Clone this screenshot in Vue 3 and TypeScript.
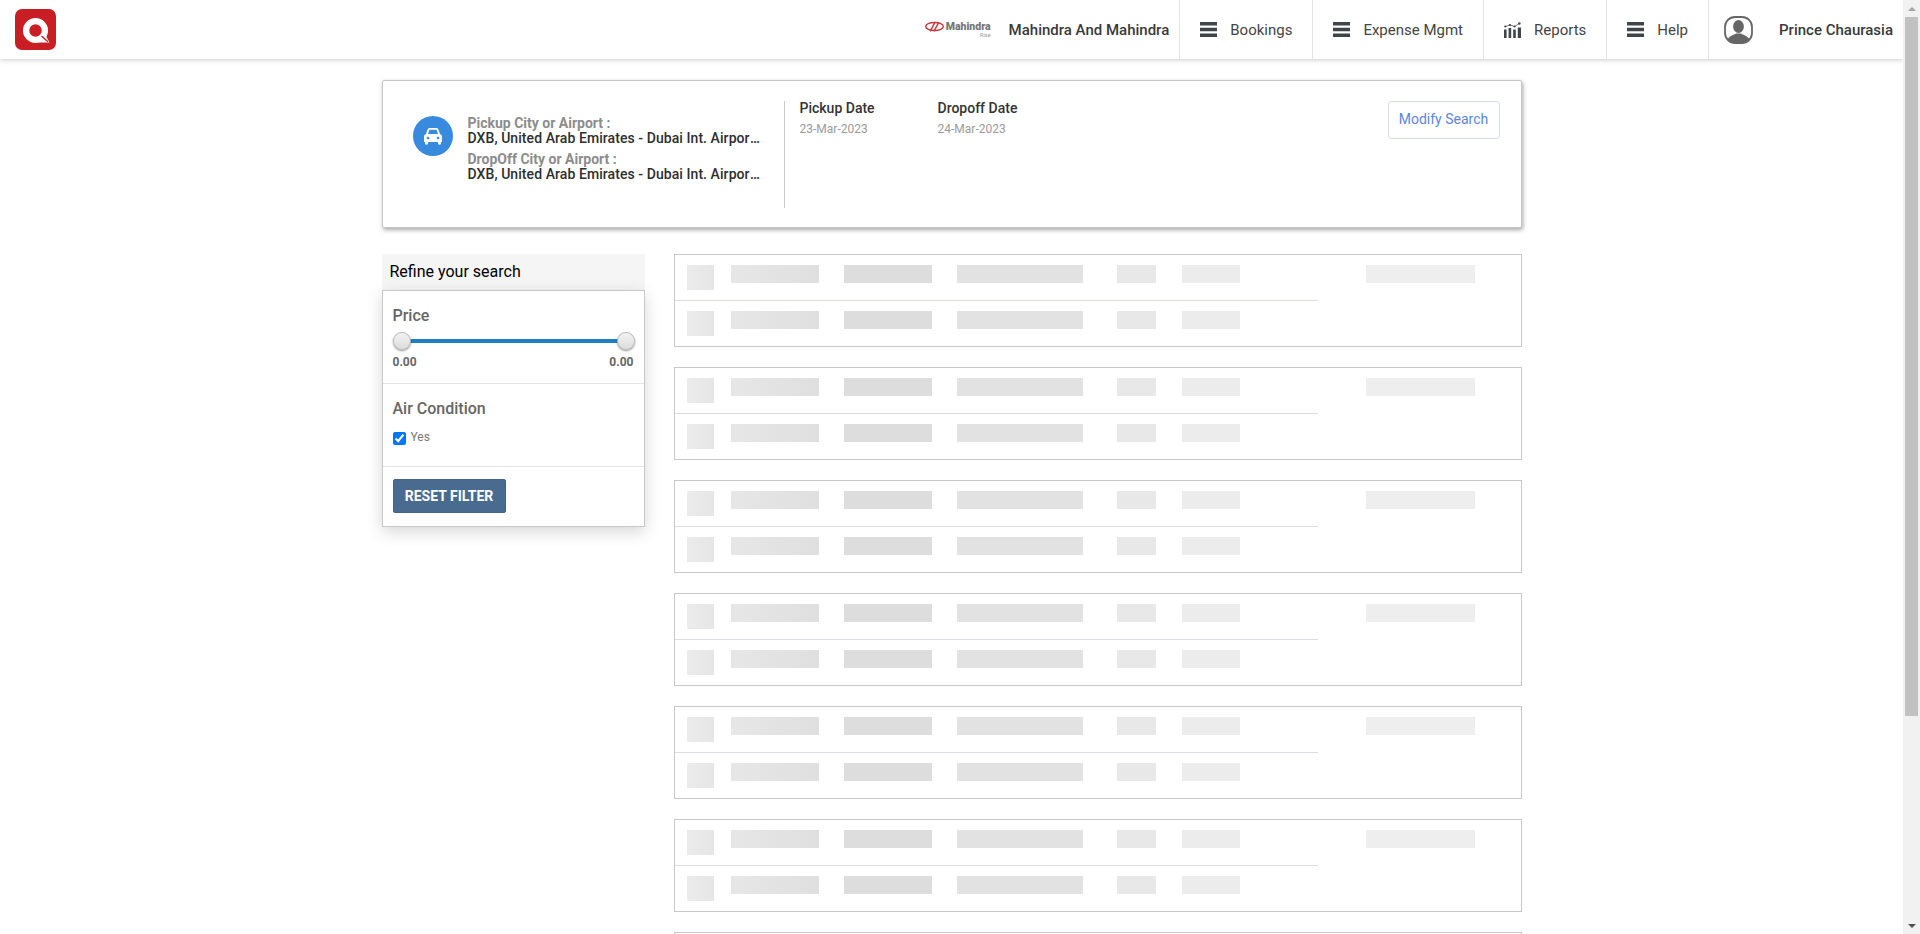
<template>
  <div class="shell">
    <div class="viewport">
      <header class="topbar">
        <a class="brand" aria-label="Home">
          <svg viewBox="0 0 41 41" width="41" height="41">
            <rect width="41" height="41" rx="7" fill="#c81e24" />
            <circle cx="20.500" cy="21.500" r="9.400" fill="none" stroke="#fff" stroke-width="6.300" />
            <path d="M23 30 L30 25 L34.500 33.500 L24 33.500 Z" fill="#fff" />
            <path d="M26.500 27 L33 32.800" stroke="#c81e24" stroke-width="1.300" />
          </svg>
        </a>
        <nav class="nav">
          <div class="org">
            <div class="org-logo">
              <div class="org-mark">
                <svg viewBox="0 0 18 10" width="21" height="11">
                  <ellipse cx="9" cy="5" rx="8" ry="3.600" fill="none" stroke="#c8383a" stroke-width="1.300" />
                  <path d="M5 9.500 L9.500 1 M8.500 9.500 L13 1" stroke="#c8383a" stroke-width="1.300" />
                </svg>
                <span class="org-word">Mahindra</span>
              </div>
              <span class="org-rise">Rise</span>
            </div>
            <span class="org-name">Mahindra And Mahindra</span>
          </div>
          <a v-for="item in navItems" :key="item.label" class="nav-item">
            <svg v-if="item.icon === 'bars'" class="nav-icon" viewBox="0 0 17 15" width="17" height="15">
              <path d="M0 0h17v3.600H0zM0 5.700h17v3.600H0zM0 11.400h17V15H0z" fill="#3f4548" />
            </svg>
            <svg v-else class="nav-icon" viewBox="0 0 17 16" width="17" height="16">
              <path d="M0 7.500h2.600V16H0zM4.600 6h2.600v10H4.600zM9.200 7.500h2.600V16H9.200zM13.800 5.500H17V16h-3.200z" fill="#3f4548" />
              <circle cx="1.300" cy="4.500" r="1.100" fill="#3f4548" />
              <circle cx="5.900" cy="3" r="1.100" fill="#3f4548" />
              <circle cx="10.500" cy="4.500" r="1.100" fill="#3f4548" />
              <circle cx="15.400" cy="1.500" r="1.200" fill="#3f4548" />
              <path d="M1.300 4.500 L5.900 3 L10.500 4.500 L15.400 1.500" fill="none" stroke="#3f4548" stroke-width="0.700" />
            </svg>
            <span>{{ item.label }}</span>
          </a>
          <div class="user">
            <svg viewBox="0 0 29 28" width="29" height="28">
              <defs>
                <clipPath id="avatar-clip"><rect x="1" y="1" width="27" height="26" rx="10" /></clipPath>
              </defs>
              <g clip-path="url(#avatar-clip)">
                <ellipse cx="14.500" cy="10.500" rx="5.400" ry="6.400" fill="#666" />
                <path d="M2 28 C3 20 9 19.500 12 17.500 L17 17.500 C20 19.500 26 20 27 28 Z" fill="#666" />
              </g>
              <rect x="1" y="1" width="27" height="26" rx="10" fill="none" stroke="#666" stroke-width="1.800" />
            </svg>
            <span class="user-name">Prince Chaurasia</span>
          </div>
        </nav>
      </header>

      <main class="page">
        <section class="summary">
          <div class="route">
            <span class="car-badge">
              <svg viewBox="0 0 20 17" width="20" height="17">
                <path
                  d="M4.600 1.600C4.900.7 5.600 0 6.600 0h6.800c1 0 1.700.7 2 1.600L17 6c1.200.4 2 1.300 2 2.600V14h-1v1.600c0 .7-.5 1.200-1.200 1.200h-.6c-.7 0-1.200-.5-1.200-1.200V14H5v1.600c0 .7-.5 1.200-1.200 1.200h-.6c-.7 0-1.200-.5-1.200-1.200V14H1V8.600C1 7.300 1.800 6.400 3 6zM5 6h10l-1.200-3.800c-.1-.3-.3-.5-.6-.5H6.800c-.3 0-.5.2-.6.5z"
                  fill="#fff"
                  fill-rule="evenodd"
                />
                <circle cx="5" cy="10" r="1.300" fill="#388ade" />
                <circle cx="15" cy="10" r="1.300" fill="#388ade" />
              </svg>
            </span>
            <div class="route-text">
              <div class="route-label">Pickup City or Airport :</div>
              <div class="route-value">DXB, United Arab Emirates - Dubai Int. Airport (DXB)</div>
              <div class="route-label second">DropOff City or Airport :</div>
              <div class="route-value">DXB, United Arab Emirates - Dubai Int. Airport (DXB)</div>
            </div>
          </div>
          <div class="dates">
            <div class="date-col">
              <div class="date-title">Pickup Date</div>
              <div class="date-value">23-Mar-2023</div>
            </div>
            <div class="date-col">
              <div class="date-title">Dropoff Date</div>
              <div class="date-value">24-Mar-2023</div>
            </div>
          </div>
          <button type="button" class="modify">Modify Search</button>
        </section>

        <div class="content">
          <aside class="sidebar">
            <h2 class="refine">Refine your search</h2>
            <div class="filters">
              <div class="filter filter-price">
                <h3 class="filter-title">Price</h3>
                <div class="slider">
                  <span class="slider-track"></span>
                  <span class="handle"></span>
                  <span class="handle"></span>
                </div>
                <div class="slider-values">
                  <span>0.00</span>
                  <span>0.00</span>
                </div>
              </div>
              <div class="filter filter-air">
                <h3 class="filter-title">Air Condition</h3>
                <label class="check">
                  <input v-model="airCondition" type="checkbox" />
                  <span>Yes</span>
                </label>
              </div>
              <div class="filter filter-reset">
                <button type="button" class="reset">RESET FILTER</button>
              </div>
            </div>
          </aside>

          <div class="results">
            <div v-for="n in placeholderCount" :key="n" class="result">
              <div class="result-main">
                <div v-for="row in 2" :key="row" class="result-row">
                  <span class="sk sk-thumb"></span>
                  <span class="sk sk-a"></span>
                  <span class="sk sk-b"></span>
                  <span class="sk sk-c"></span>
                  <span class="sk sk-d"></span>
                  <span class="sk sk-e"></span>
                </div>
              </div>
              <span class="sk sk-price"></span>
            </div>
          </div>
        </div>
      </main>
    </div>
    <div class="scrollbar" aria-hidden="true">
      <span class="scroll-arrow up"></span>
      <span class="scroll-thumb"></span>
      <span class="scroll-rest"></span>
      <span class="scroll-arrow down"></span>
    </div>
  </div>
</template>

<script setup lang="ts">
import { ref } from 'vue';

const navItems = [
  { label: 'Bookings', icon: 'bars' },
  { label: 'Expense Mgmt', icon: 'bars' },
  { label: 'Reports', icon: 'chart' },
  { label: 'Help', icon: 'bars' },
];
const placeholderCount = 8;
const airCondition = ref(true);
</script>

<style scoped>
.shell {
  display: flex;
  height: 100vh;
  overflow: hidden;
  background: #fff;
}
.viewport {
  flex: 1;
  min-width: 0;
  overflow: hidden;
}
.scrollbar {
  display: flex;
  flex-direction: column;
  flex: none;
  width: 17px;
  background: #f1f1f1;
}
.scroll-arrow {
  display: flex;
  align-items: center;
  justify-content: center;
  flex: none;
  height: 17px;
}
.scroll-arrow::before {
  content: '';
  border-left: 4px solid transparent;
  border-right: 4px solid transparent;
}
.scroll-arrow.up::before {
  border-bottom: 4px solid #a3a3a3;
}
.scroll-arrow.down::before {
  border-top: 4px solid #505050;
}
.scroll-thumb {
  flex: none;
  height: 699px;
  margin: 0 2px;
  background: #c1c1c1;
}
.scroll-rest {
  flex: 1;
}

.topbar {
  display: flex;
  align-items: center;
  height: 59px;
  background: #fff;
  box-shadow: 0 1px 5px rgba(0, 0, 0, 0.2);
  font-family: Roboto, sans-serif;
  position: relative;
}
.brand {
  display: flex;
  margin-left: 15px;
}
.nav {
  display: flex;
  align-items: stretch;
  height: 100%;
  margin-left: auto;
  font-size: 15px;
  color: #444;
}
.org {
  display: flex;
  align-items: center;
  padding-right: 10px;
}
.org-logo {
  display: flex;
  flex-direction: column;
  align-items: flex-end;
  width: 67px;
  margin-right: 18px;
  margin-top: 1px;
}
.org-mark {
  display: flex;
  align-items: center;
  gap: 1px;
}
.org-word {
  font-size: 10.500px;
  font-weight: 900;
  line-height: 10px;
  color: #777;
}
.org-rise {
  font-size: 5.500px;
  line-height: 7px;
  color: #999;
}
.org-name,
.user-name {
  font-weight: 500;
  color: #3a3a3a;
}
.nav-item {
  display: flex;
  align-items: center;
  padding: 0 20px;
  border-left: 1px solid #e4e4e4;
}
.nav-icon {
  margin-right: 13px;
}
.user {
  display: flex;
  align-items: center;
  padding: 0 10px 0 15px;
  border-left: 1px solid #e4e4e4;
}
.user svg {
  margin-right: 26px;
}

.page {
  width: 1140px;
  margin: 21px auto 0;
  padding-bottom: 64px;
  font-family: Roboto, sans-serif;
}
.summary {
  display: flex;
  align-items: flex-start;
  height: 148px;
  box-sizing: border-box;
  padding: 20px 21px 19px 30px;
  border: 1px solid #c6c6c6;
  border-radius: 2px;
  box-shadow: 1px 2px 4px rgba(0, 0, 0, 0.35);
  background: #fff;
}
.route {
  display: flex;
  gap: 15px;
  width: 372px;
  height: 107px;
  box-sizing: border-box;
  padding-top: 15px;
  border-right: 1px solid #ccc;
}
.car-badge {
  display: flex;
  align-items: center;
  justify-content: center;
  flex: none;
  width: 40px;
  height: 40px;
  border-radius: 50%;
  background: #388ade;
}
.route-text {
  width: 294px;
  font-size: 14px;
  font-weight: 500;
  line-height: 15px;
}
.route-label {
  color: #8c8c8c;
  font-weight: 700;
}
.route-label.second {
  margin-top: 6px;
}
.route-value {
  color: #2e2e2e;
  letter-spacing: 0.07px;
  white-space: nowrap;
  overflow: hidden;
  text-overflow: ellipsis;
}
.dates {
  display: flex;
  padding-left: 15px;
}
.date-col {
  width: 138px;
}
.date-title {
  font-size: 14px;
  font-weight: 500;
  line-height: 15px;
  color: #333;
}
.date-value {
  margin-top: 6px;
  font-size: 12px;
  line-height: 15px;
  color: #9a9a9a;
}
.modify {
  width: 112px;
  height: 38px;
  margin-left: auto;
  padding: 0 0 2px;
  border: 1px solid #d6dcea;
  border-radius: 3px;
  background: #fff;
  color: #5c86dc;
  font-family: Roboto, sans-serif;
  font-size: 14px;
}

.content {
  display: flex;
  align-items: flex-start;
  gap: 29px;
  margin-top: 26px;
}
.sidebar {
  flex: none;
  width: 263px;
}
.refine {
  margin: 0;
  height: 36px;
  padding-left: 8px;
  background: #f5f5f5;
  color: #000;
  font-size: 16px;
  font-weight: 400;
  line-height: 35px;
}
.filters {
  border: 1px solid #c8c8c8;
  background: #fff;
  box-shadow: 0 5px 15px rgba(0, 0, 0, 0.16);
}
.filter {
  padding: 0 10px;
}
.filter + .filter {
  border-top: 1px solid #e4e4e4;
}
.filter-title {
  margin: 0;
  font-size: 16px;
  font-weight: 500;
  line-height: 18px;
  color: #666;
}
.filter-price {
  height: 92px;
  padding-top: 16px;
  box-sizing: border-box;
}
.slider {
  display: flex;
  justify-content: space-between;
  position: relative;
  margin-top: 8px;
  height: 18px;
  width: 242px;
}
.slider-track {
  position: absolute;
  left: 9px;
  right: 9px;
  top: 6px;
  height: 4px;
  background: #1f7fc4;
}
.handle {
  position: relative;
  box-sizing: border-box;
  width: 18px;
  height: 18px;
  margin-top: -1px;
  border-radius: 50%;
  border: 1px solid #bbb;
  background: linear-gradient(to bottom, #f3f3f3, #dcdcdc);
  box-shadow: 0 1px 2px rgba(0, 0, 0, 0.45);
}
.slider-values {
  display: flex;
  justify-content: space-between;
  width: 241px;
  margin-top: 4px;
  font-size: 12px;
  font-weight: 700;
  line-height: 15px;
  color: #666;
}
.filter-air {
  height: 83px;
  padding-top: 16px;
  box-sizing: border-box;
}
.check {
  display: flex;
  align-items: flex-start;
  margin-top: 12px;
  font-size: 12px;
  line-height: 14px;
  color: #777;
}
.check input {
  width: 13px;
  height: 13px;
  margin: 2px 5px 0 0;
}
.filter-reset {
  height: 60px;
  padding-top: 12px;
  box-sizing: border-box;
}
.reset {
  width: 113px;
  height: 34px;
  padding: 0;
  border: 1px solid #466586;
  border-radius: 2px;
  background: #4a6b90;
  color: #fff;
  font-family: Roboto, sans-serif;
  font-size: 14px;
  font-weight: 700;
}

.results {
  display: flex;
  flex-direction: column;
  gap: 20px;
  flex: none;
  width: 848px;
}
.result {
  display: flex;
  align-items: flex-start;
  border: 1px solid #c8c8c8;
}
.result-main {
  flex: none;
  width: 643px;
}
.result-row {
  display: flex;
  align-items: flex-start;
  height: 45px;
  box-sizing: border-box;
  padding: 10px 0 0 12px;
}
.result-row + .result-row {
  height: 46px;
  padding-top: 10px;
  border-top: 1px solid #dedbe6;
}
.sk {
  display: block;
  flex: none;
  height: 18px;
}
.sk-thumb {
  width: 27px;
  height: 25px;
  background: linear-gradient(90deg, #ebebeb, #e6e6e6);
}
.sk-a {
  width: 88px;
  margin-left: 17px;
  background: linear-gradient(90deg, #e7e7e7, #dfdfdf);
}
.sk-b {
  width: 88px;
  margin-left: 25px;
  background: #dddddd;
}
.sk-c {
  width: 126px;
  margin-left: 25px;
  background: #e2e2e2;
}
.sk-d {
  width: 39px;
  margin-left: 34px;
  background: #e8e8e8;
}
.sk-e {
  width: 58px;
  margin-left: 26px;
  background: #ececec;
}
.sk-price {
  width: 109px;
  margin: 10px 0 0 48px;
  background: #eeeeee;
}
</style>
